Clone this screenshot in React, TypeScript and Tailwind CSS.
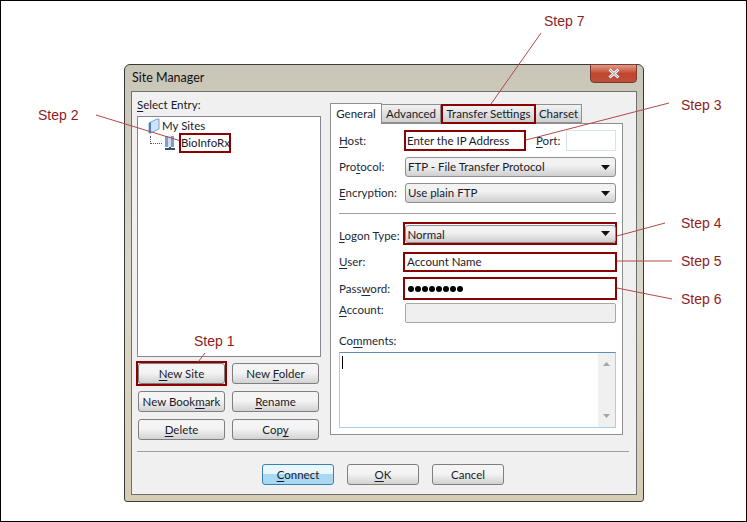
import React from "react";

const Btn = ({ children, w = "w-[87px]", focus = false, h = "h-[21px]" }: { children: React.ReactNode; w?: string; focus?: boolean; h?: string }) => (
  <div
    className={`${w} ${h} flex items-center justify-center rounded-[3px] border text-[#1a1a2a] ${
      focus
        ? "border-[#3c7fb1] bg-gradient-to-b from-[#e8f6fd] from-45% to-[#a9d9f2] to-50%"
        : "border-[#7f7f7f] bg-gradient-to-b from-[#f4f4f4] from-45% to-[#d2d2d2]"
    }`}
  >
    <span>{children}</span>
  </div>
);

const U = ({ children }: { children: React.ReactNode }) => <span className="underline underline-offset-2">{children}</span>;

const Select = ({ children, h = "h-[20px]" }: { children: React.ReactNode; h?: string }) => (
  <div className={`${h} w-[211px] flex shrink-0 items-center justify-between rounded-[3px] border border-[#8e8f8f] bg-gradient-to-b from-[#f2f2f2] from-40% to-[#cfcfcf] pl-[2px] pr-[5px] text-[#1a1a2a]`}>
    <span>{children}</span>
    <svg width="9" height="5" viewBox="0 0 9 5"><path d="M0 0h9L4.5 5z" fill="#111" /></svg>
  </div>
);

const Label = ({ children }: { children: React.ReactNode }) => <div className="w-[66px] shrink-0 text-[#1a2a3a]">{children}</div>;

export default function App() {
  return (
    <div
      className="relative h-[522px] w-[747px] overflow-hidden whitespace-nowrap border border-black bg-white pl-[123px] pt-[63px] text-[11.5px] leading-[14px]"
      style={{ fontFamily: 'Lato, "Open Sans", sans-serif' }}
    >
      {/* window */}
      <div className="flex h-[438px] w-[520px] flex-col rounded-t-[6px] rounded-b-[3px] border border-[#3a3a3a] bg-gradient-to-b from-[#c9c6b8] via-[#dcd8c8] to-[#d5ccb4] px-[6px] pb-[6px]">
        <div className="relative h-[26px] shrink-0">
          <div className="pl-[1px] pt-[6px] text-[12.5px] text-[#111]">Site Manager</div>
          <div className="absolute right-[0px] top-[-1px] flex h-[19px] w-[47px] items-center justify-center rounded-b-[4px] border border-[#7a3a30] bg-gradient-to-b from-[#dd9a88] via-[#c4452e] to-[#b9503a]">
            <svg width="14" height="11" viewBox="0 0 14 11">
              <path d="M2.5 1.5 L11.5 9.5 M11.5 1.5 L2.5 9.5" stroke="#fff" strokeWidth="3" />
              <path d="M2.5 1.5 L11.5 9.5 M11.5 1.5 L2.5 9.5" stroke="#8a96a8" strokeWidth="1" />
            </svg>
          </div>
        </div>
        <div className="flex flex-1 flex-col border border-[#6f6f6f] bg-[#f0f0f0] px-[5px]">
          <div className="flex h-[359px]">
            {/* left */}
            <div className="w-[184px] shrink-0">
              <div className="h-[24px] pt-[6px] text-[#1a1a2a]"><U>S</U>elect Entry:</div>
              <div className="h-[241px] border border-[#828790] bg-white pl-[8px] pt-[1px]">
                <div className="flex h-[15px] items-center">
                  <svg width="16" height="16" viewBox="0 0 16 16" className="shrink-0">
                    <path d="M3 15 L3 5 L11 1 L13 1 L13 11 L5 15z" fill="#cfe4fa" stroke="#7f9fc6" />
                    <path d="M3 15 L3 5 L5 4 L5 15z" fill="#3f83d8" />
                  </svg>
                  <span className="text-[#1a1a2a]">My Sites</span>
                </div>
                <div className="flex h-[20px] items-center">
                  <div className="ml-[4px] mt-[3px] h-[8px] w-[12px] self-start border-b border-l border-dotted border-[#555]" />
                  <svg width="16" height="16" viewBox="0 0 16 16" className="shrink-0">
                    <rect x="3" y="1" width="9" height="11" fill="#7ea0c8" />
                    <rect x="6" y="1" width="3" height="11" fill="#d0ddec" />
                    <path d="M7 12h2v1h4v2H3v-2h4z" fill="#36506e" />
                  </svg>
                  <div className="relative z-10 ml-[1px] flex h-[20px] w-[52px] shrink-0 items-center border-2 border-[#8b0000] pb-[1px] text-[#1a1a2a]">BioInfoRx</div>
                </div>
              </div>
              <div className="grid grid-cols-[87px_87px] gap-x-[7px] gap-y-[7px] pl-[1px] pt-[6px]">
                <div className="-m-[2px] border-2 border-[#8b0000]"><Btn w="w-full"><U>N</U>ew Site</Btn></div>
                <Btn>New <U>F</U>older</Btn>
                <Btn>New Book<U>m</U>ark</Btn>
                <Btn><U>R</U>ename</Btn>
                <Btn><U>D</U>elete</Btn>
                <Btn>Cop<U>y</U></Btn>
              </div>
            </div>
            {/* right */}
            <div className="ml-[9px] w-[293px] shrink-0 pt-[11px]">
              <div className="flex h-[20px] items-end text-[#1a1a2a]">
                <div className="relative z-10 -mb-[1px] flex h-[21px] w-[52px] items-center justify-center border border-b-0 border-[#8e8f8f] bg-white">General</div>
                <div className="flex h-[19px] w-[59px] items-center justify-center border border-l-0 border-[#8e8f8f] bg-gradient-to-b from-[#f2f2f2] to-[#cfcfcf]">Advanced</div>
                <div className="relative z-10 -mb-[1px] flex h-[20px] w-[95px] items-center justify-center border-2 border-[#8b0000] bg-gradient-to-b from-[#f2f2f2] to-[#cfcfcf]">Transfer Settings</div>
                <div className="flex h-[19px] w-[46px] items-center justify-center border border-l-0 border-[#8e8f8f] bg-gradient-to-b from-[#f2f2f2] to-[#cfcfcf]">Charset</div>
              </div>
              <div className="h-[312px] border border-[#8e8f8f] bg-white pl-[8px] text-[#1a2a3a]">
                <div className="mt-[6px] flex h-[21px] items-center">
                  <Label><U>H</U>ost:</Label>
                  <div className="-ml-[1px] flex h-[21px] w-[122px] shrink-0 items-center border-2 border-[#8b0000] pl-[1px] text-[#1a1a2a]">Enter the IP Address</div>
                  <div className="ml-[10px] w-[30px] shrink-0"><U>P</U>ort:</div>
                  <div className="h-[21px] w-[50px] shrink-0 border border-[#d6e3ee] bg-white" />
                </div>
                <div className="mt-[6px] flex h-[20px] items-center">
                  <Label>Pro<U>t</U>ocol:</Label>
                  <Select>FTP - File Transfer Protocol</Select>
                </div>
                <div className="mt-[6px] flex h-[20px] items-center">
                  <Label><U>E</U>ncryption:</Label>
                  <Select>Use plain FTP</Select>
                </div>
                <div className="mt-[10px] h-px w-[277px] bg-[#a0a0a0]" />
                <div className="mt-[8px] flex h-[23px] items-center">
                  <div className="w-[64px] shrink-0 pt-[4px]"><U>L</U>ogon Type:</div>
                  <div className="flex h-[23px] w-[214px] shrink-0 items-center justify-center border-2 border-[#8b0000]">
                    <Select h="h-[18px]"><span className="relative top-[1px]">Normal</span></Select>
                  </div>
                </div>
                <div className="mt-[7px] flex h-[20px] items-center">
                  <div className="w-[64px] shrink-0"><U>U</U>ser:</div>
                  <div className="flex h-[20px] w-[214px] shrink-0 items-center border-2 border-[#8b0000] pb-[1px] pl-[2px] text-[#1a1a2a]">Account Name</div>
                </div>
                <div className="mt-[5px] flex h-[23px] items-center">
                  <div className="w-[64px] shrink-0">Pass<U>w</U>ord:</div>
                  <div className="flex h-[23px] w-[214px] shrink-0 items-center gap-[1px] border-2 border-[#8b0000] pl-[3px]">
                    {[0, 1, 2, 3, 4, 5, 6, 7].map((i) => (
                      <span key={i} className="h-[6px] w-[6px] rounded-full bg-black" />
                    ))}
                  </div>
                </div>
                <div className="mt-[3px] flex h-[20px] items-center">
                  <div className="w-[66px] shrink-0 -translate-y-[3px]"><U>A</U>ccount:</div>
                  <div className="h-[20px] w-[211px] shrink-0 rounded-[2px] border border-[#a8a8a8] bg-[#efefef]" />
                </div>
                <div className="mt-[11px] h-[18px]">Co<U>m</U>ments:</div>
                <div className="flex h-[76px] w-[277px] justify-between border border-[#a9cfe8] border-t-[#5b8fb8] bg-white">
                  <div className="ml-[2px] mt-[3px] h-[13px] w-px bg-black" />
                  <div className="flex w-[17px] flex-col items-center justify-between bg-[#f0f0f0] py-[9px]">
                    <svg width="7" height="4" viewBox="0 0 7 4"><path d="M3.5 0L7 4H0z" fill="#a5a5a5" /></svg>
                    <svg width="7" height="4" viewBox="0 0 7 4"><path d="M3.5 4L7 0H0z" fill="#a5a5a5" /></svg>
                  </div>
                </div>
              </div>
            </div>
          </div>
          <div className="mr-[2px] h-px bg-[#a0a0a0]" />
          <div className="flex gap-[13px] pl-[125px] pt-[12px]">
            <Btn w="w-[72px]" focus><U>C</U>onnect</Btn>
            <Btn w="w-[72px]"><U>O</U>K</Btn>
            <Btn w="w-[72px]">Cancel</Btn>
          </div>
        </div>
      </div>

      {/* annotations */}
      <svg className="pointer-events-none absolute left-[-1px] top-[-1px]" width="747" height="522">
        <g stroke="#b04a4a" strokeWidth="1" fill="none">
          <line x1="96" y1="115" x2="181" y2="141" />
          <line x1="205" y1="353" x2="198" y2="362" />
          <line x1="541" y1="33" x2="491" y2="104" />
          <line x1="669" y1="103" x2="526" y2="140" />
          <line x1="665" y1="223" x2="617" y2="236" />
          <line x1="617" y1="261" x2="672" y2="261" />
          <line x1="617" y1="288" x2="672" y2="299" />
        </g>
      </svg>
      {[
        ["Step 2", "left-[37px] top-[106px]"],
        ["Step 1", "left-[193px] top-[332px]"],
        ["Step 7", "left-[543px] top-[12px]"],
        ["Step 3", "left-[680px] top-[96px]"],
        ["Step 4", "left-[680px] top-[214px]"],
        ["Step 5", "left-[680px] top-[252px]"],
        ["Step 6", "left-[680px] top-[290px]"],
      ].map(([t, c]) => (
        <div key={t} className={`absolute ${c} whitespace-nowrap text-[14px] leading-[16px] text-[#8f1d1d]`} style={{ fontFamily: '"Liberation Sans", sans-serif' }}>{t}</div>
      ))}
    </div>
  );
}
